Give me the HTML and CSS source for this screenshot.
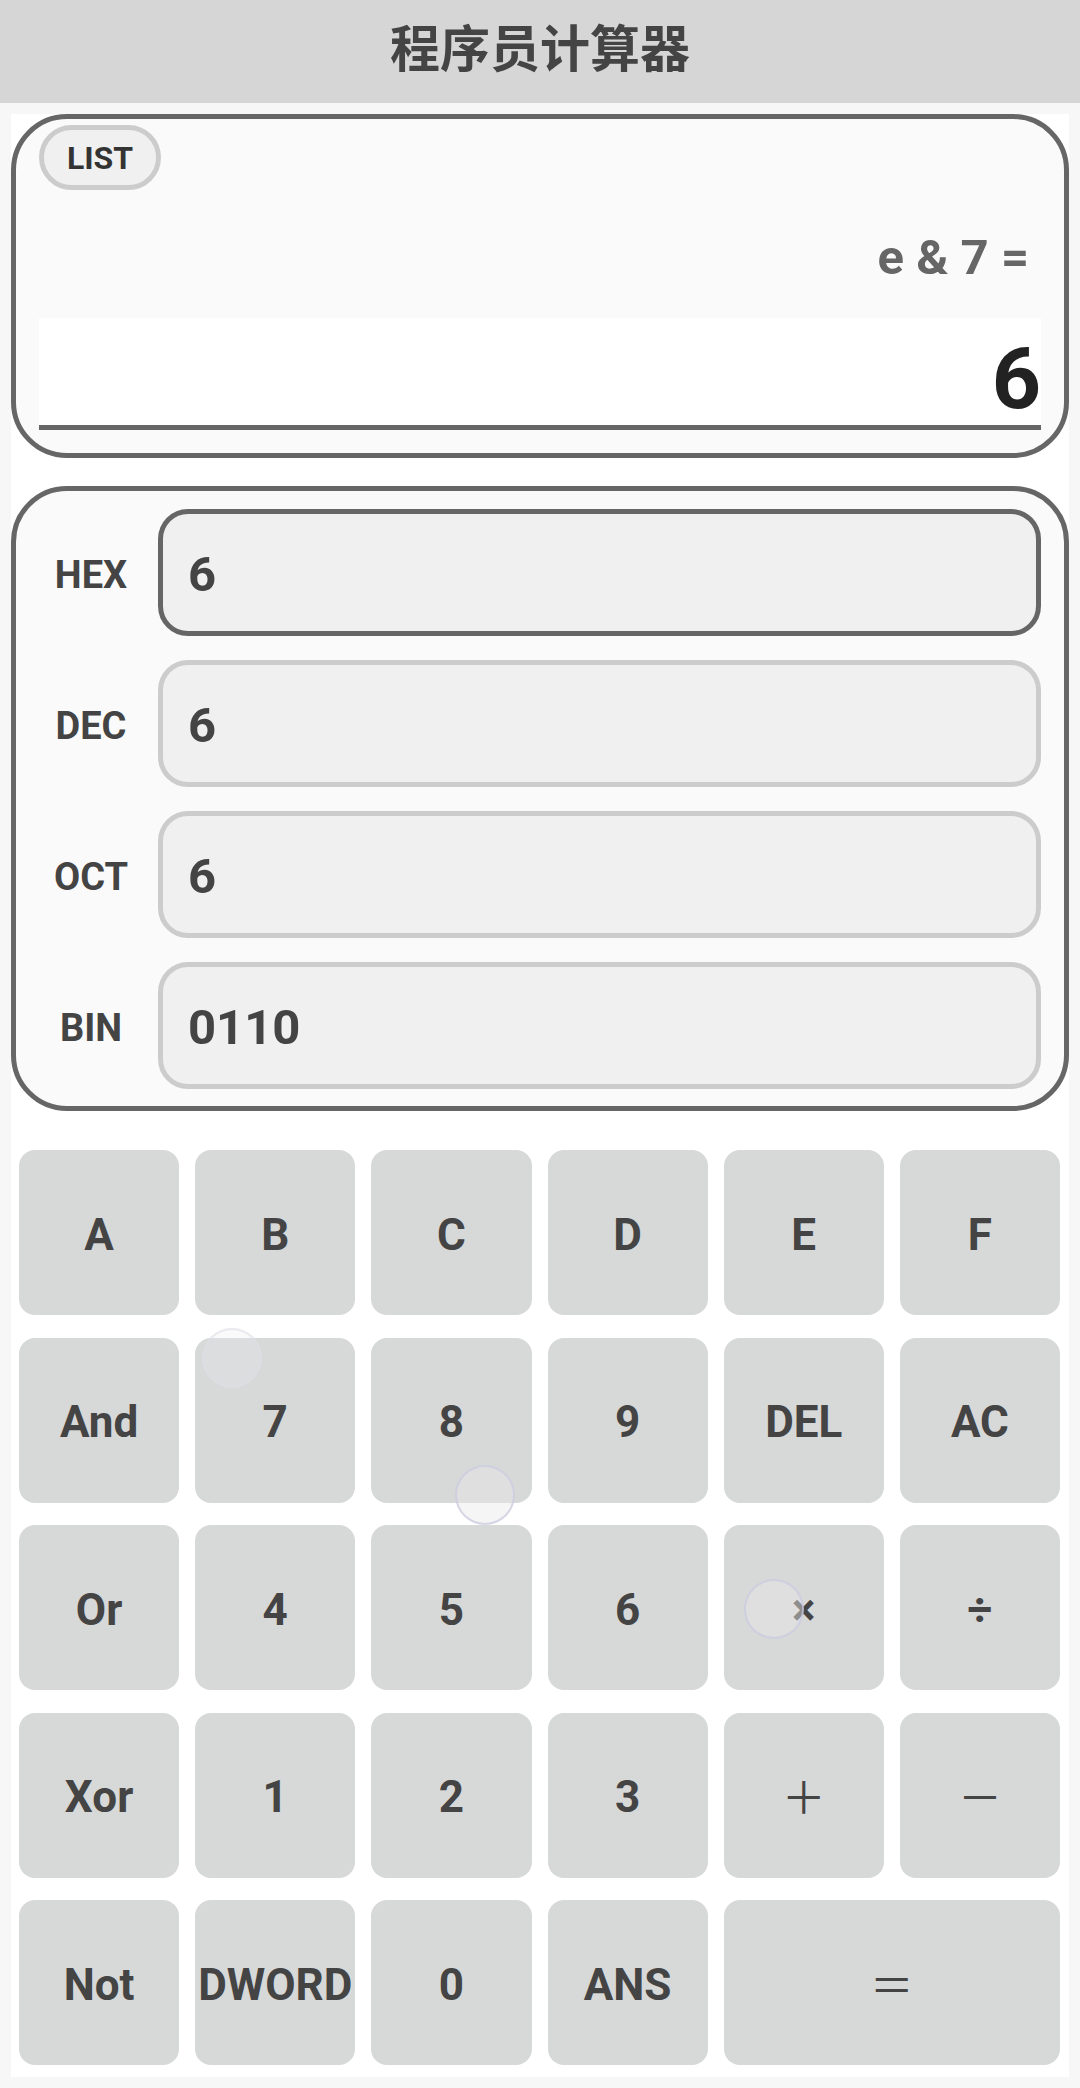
FILE: index.html
```html
<!DOCTYPE html>
<html lang="zh-CN">
<head>
<meta charset="UTF-8">
<meta name="viewport" content="width=device-width, initial-scale=1.0">
<title>程序员计算器</title>
<link rel="stylesheet" href="styles.css">
</head>
<body>
<div class="titlebar">程序员计算器</div>
<div class="main">
    <!-- 表达式 / 结果 -->
    <div class="screen">
        <div class="list-btn">LIST</div>
        <div class="expr">e &amp; 7 =</div>
        <div class="result">6</div>
    </div>

    <!-- 进制显示 -->
    <div class="bases">
        <div class="base-row">
            <div class="base-name">HEX</div>
            <div class="base-val active">6</div>
        </div>
        <div class="base-row">
            <div class="base-name">DEC</div>
            <div class="base-val">6</div>
        </div>
        <div class="base-row">
            <div class="base-name">OCT</div>
            <div class="base-val">6</div>
        </div>
        <div class="base-row">
            <div class="base-name">BIN</div>
            <div class="base-val">0110</div>
        </div>
    </div>

    <div class="keypad">
        <div class="key">A</div>
        <div class="key">B</div>
        <div class="key">C</div>
        <div class="key">D</div>
        <div class="key">E</div>
        <div class="key">F</div>

        <div class="key">And</div>
        <div class="key">7</div>
        <div class="key">8</div>
        <div class="key">9</div>
        <div class="key">DEL</div>
        <div class="key">AC</div>

        <div class="key">Or</div>
        <div class="key">4</div>
        <div class="key">5</div>
        <div class="key">6</div>
        <div class="key">×</div>
        <div class="key">÷</div>

        <div class="key">Xor</div>
        <div class="key">1</div>
        <div class="key">2</div>
        <div class="key">3</div>
        <div class="key thin">＋</div>
        <div class="key thin">－</div>

        <div class="key">Not</div>
        <div class="key">DWORD</div>
        <div class="key">0</div>
        <div class="key">ANS</div>
        <div class="key thin wide">＝</div>
    </div>

    <!-- 触摸波纹 -->
    <div class="touch t1"></div>
    <div class="touch t2"></div>
    <div class="touch t3"></div>
</div>
</body>
</html>
```

FILE: styles.css
```css
body{
    margin: 0;
    background-color: #f7f7f7;
    font-family: Roboto, "Noto Sans", "Noto Sans CJK SC", sans-serif;
    color: #444;
}
.titlebar{
    height: 103px;
    box-sizing: border-box;
    padding-bottom: 14px;
    background-color: #d6d6d6;
    display: flex;
    align-items: center;
    justify-content: center;
    font-family: "Noto Sans CJK SC", sans-serif;
    font-size: 50px;
    line-height: 1;
    font-weight: 700;
    color: #444;
}
.main{
    position: relative; /* 波纹用 */
    margin: 11px 11px 0 11px;
    height: 1963px;
    background-color: #fff;
}

/* 上面的屏幕 */
.screen{
    height: 344px;
    box-sizing: border-box;
    border: 5px solid #666;
    border-radius: 56px;
    background-color: #fafafa;
    padding: 6px 23px 0 23px;
}
.list-btn{
    width: 122px;
    height: 65px;
    box-sizing: border-box;
    border: 5px solid #ccc;
    border-radius: 33px;
    background-color: #f0f0f0;
    display: flex;
    align-items: center;
    justify-content: center;
    font-size: 32px;
    font-weight: 700;
    color: #333;
}
.expr{
    margin-top: 38px;
    height: 60px;
    line-height: 60px;
    text-align: right;
    padding-right: 12px;
    font-size: 49px;
    font-weight: 700;
    color: #666;
}
.result{
    margin-top: 30px;
    height: 86px;
    line-height: 86px;
    padding: 18px 0 3px 0;
    background-color: #fff;
    border-bottom: 5px solid #666;
    text-align: right;
    font-size: 86px;
    font-weight: 700;
    color: #222;
}

/* 进制 */
.bases{
    margin-top: 28px;
    height: 625px;
    box-sizing: border-box;
    border: 5px solid #666;
    border-radius: 56px;
    background-color: #fafafa;
    padding: 18px 23px 17px 0;
    display: flex;
    flex-direction: column;
    gap: 24px;
}
.base-row{
    display: flex;
    align-items: center;
    height: 127px;
}
.base-name{
    width: 142px;
    padding: 4px 0 0 8px;
    box-sizing: border-box;
    text-align: center;
    font-size: 38px;
    font-weight: 700;
    color: #444;
}
.base-val{
    flex: 1;
    height: 127px;
    box-sizing: border-box;
    border: 5px solid #ccc;
    border-radius: 30px;
    background-color: #f0f0f0;
    padding: 4px 0 0 25px;
    display: flex;
    align-items: center;
    font-size: 49px;
    font-weight: 700;
    color: #444;
}
.base-val.active{
    border-color: #666;
}

/* 键盘 */
.keypad{
    margin-top: 39px;
    padding: 0 9px 0 8px;
    display: grid;
    grid-template-columns: repeat(6, 1fr);
    grid-auto-rows: 165px;
    gap: 22.5px 16px;
}
.key{
    background-color: #d7d8d8;
    border-radius: 16px;
    padding-top: 4px;
    box-sizing: border-box;
    display: flex;
    align-items: center;
    justify-content: center;
    font-size: 44px;
    font-weight: 700;
    color: #444;
}
.key.thin{
    padding-top: 0;
    font-family: "Noto Sans CJK SC", sans-serif;
    font-weight: 400;
    font-size: 44px;
}
.key.wide{
    grid-column: span 2;
}

.touch{
    position: absolute;
    width: 60px;
    height: 60px;
    box-sizing: border-box;
    border-radius: 50%;
    border: 2px solid rgba(200, 200, 222, 0.7);
    background-color: rgba(232, 232, 236, 0.45);
}
.t1{ left: 191px; top: 1214px; border-color: rgba(222, 222, 230, 0.6); background-color: rgba(235, 235, 238, 0.25); }
.t2{ left: 444px; top: 1351px; }
.t3{ left: 733px; top: 1465px; }
```
